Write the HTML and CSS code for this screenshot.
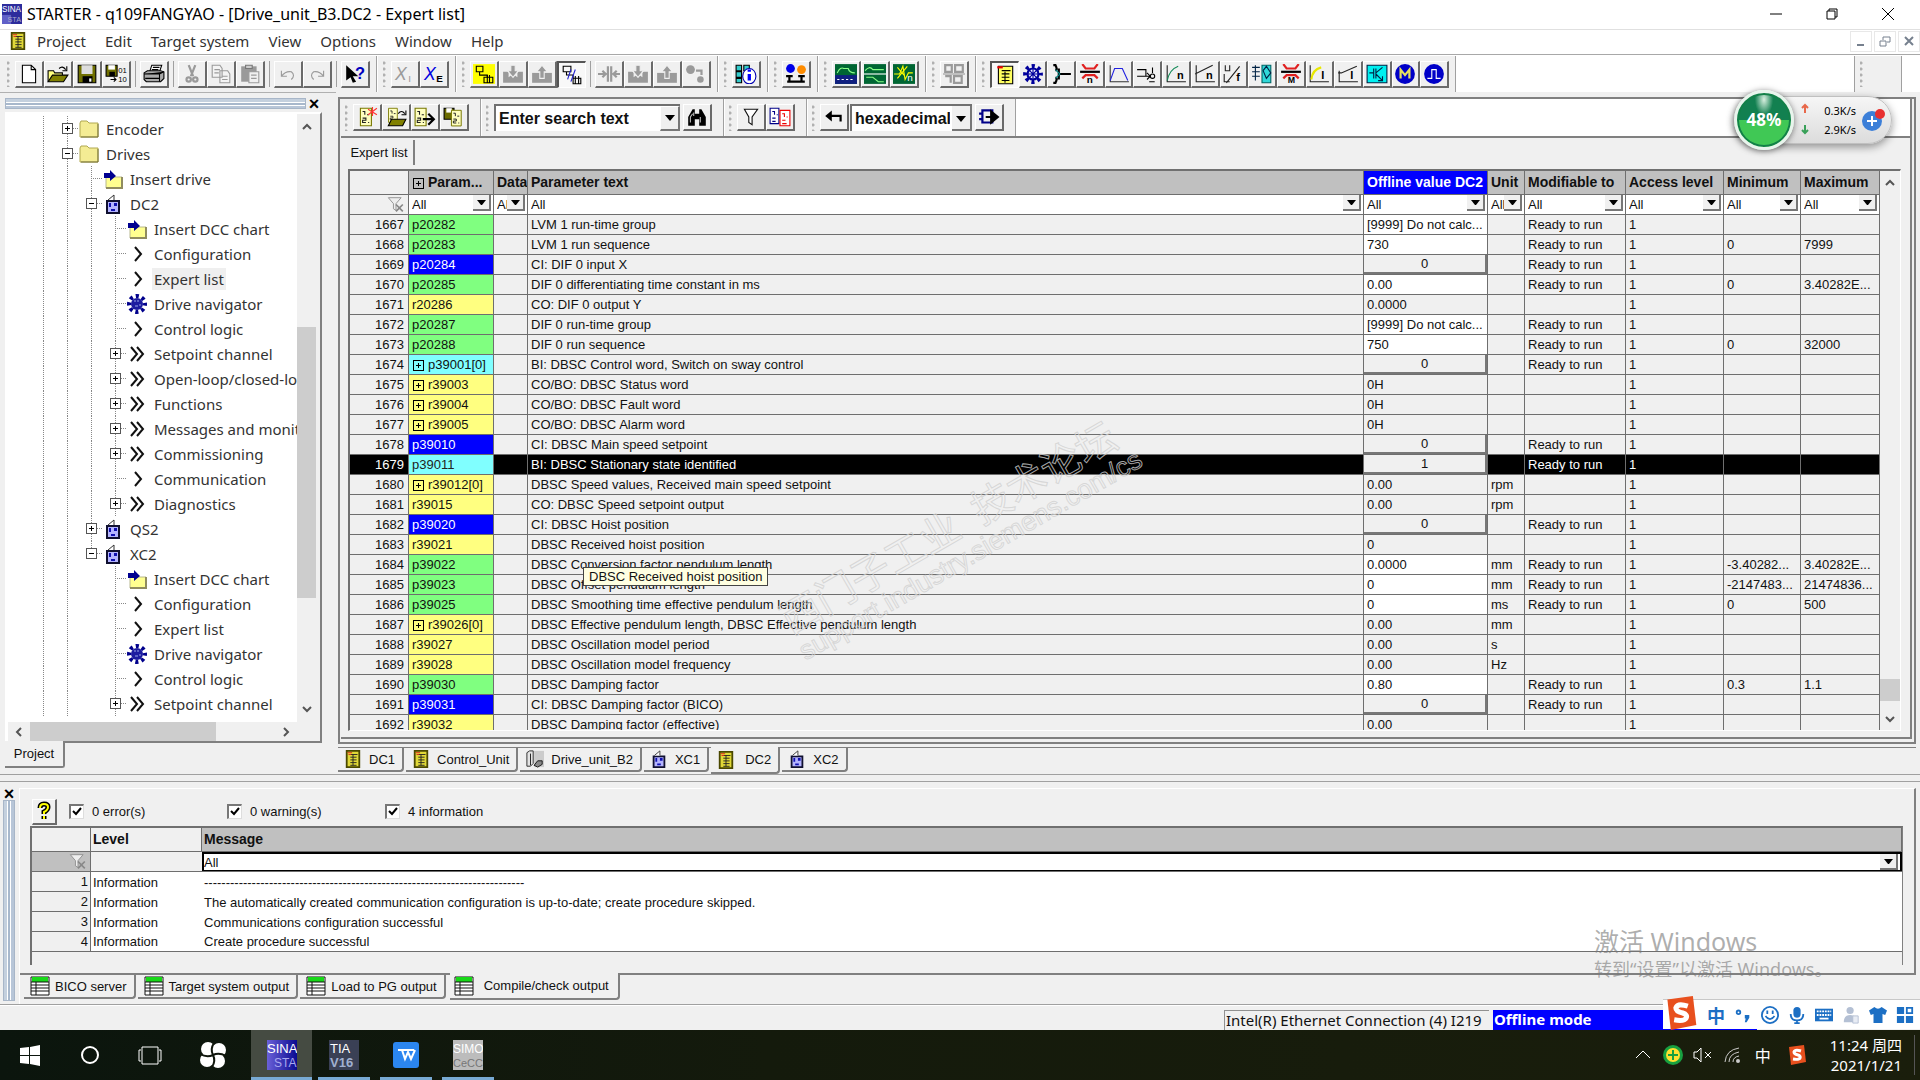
FILE: index.html
```html
<!DOCTYPE html>
<html lang="en">
<head>
    <meta charset="UTF-8">
    <meta name="viewport" content="width=device-width, initial-scale=1.0">
    <title>STARTER - q109FANGYAO</title>
    <link rel="stylesheet" href="styles.css">
</head>
<body>
    <svg class="sprite" aria-hidden="true">
        <symbol id="sheet" viewBox="0 0 20 20">
            <path d="M3 1h14v18H3z" fill="#e0d838" stroke="#4a4800" stroke-width="2"/>
            <path d="M7 5h8M7 8h7M7 11h7M7 14h7M7 17h7M10 5v12" stroke="#222" fill="none"/>
            <path d="M4 3h5M5 5h3" stroke="#e02020"/>
        </symbol>
        <symbol id="drive" viewBox="0 0 20 20">
            <path d="M4 7v12h12V7z" fill="#b4b4ff" stroke="#101030" stroke-width="2"/>
            <path d="M5 6l6-5v5" fill="#fff" stroke="#333"/>
            <path d="M6 9h2v4H6zM11 9h3v3h-3zM8 15h4v2H8z" fill="#1010b0"/>
        </symbol>
        <symbol id="folder" viewBox="0 0 20 20">
            <path d="M1 4l1-2h6l2 2h9v14H1z" fill="#f4ec94" stroke="#b0a850"/>
            <path d="M2 18h17V5" fill="none" stroke="#77733a"/>
        </symbol>
        <symbol id="insert" viewBox="0 0 20 20">
            <path d="M3 8h16v11H3z" fill="#ffff90" stroke="#b8b890"/>
            <path d="M3 19h16V8" fill="none" stroke="#908c60" stroke-width="2"/>
            <path d="M1 4h6V1l6 6-6 5V9H1z" fill="#000090"/>
        </symbol>
        <symbol id="chevron" viewBox="0 0 20 20"><path d="M8 3l6 7-6 7" fill="none" stroke="#111" stroke-width="2"/></symbol>
        <symbol id="chevrons" viewBox="0 0 20 20"><path d="M4 3l6 7-6 7M10 3l6 7-6 7" fill="none" stroke="#111" stroke-width="2"/></symbol>
        <symbol id="gear" viewBox="0 0 20 20">
            <circle cx="10" cy="10" r="6" fill="#1c1ca0"/>
            <circle cx="10" cy="10" r="8" fill="none" stroke="#00008c" stroke-width="4" stroke-dasharray="3.14 3.14" stroke-dashoffset="1.5"/>
            <path d="M7 7h2M11 6v2M8 12h3M12 11h2" stroke="#99a8e8"/>
        </symbol>
        <symbol id="funnel-x" viewBox="0 0 20 20">
            <path d="M1 2h15l-6 7v8l-3-2V9z" fill="#eee" stroke="#888"/>
            <path d="M10 10l8 8M18 10l-8 8" stroke="#888" stroke-width="2"/>
        </symbol>
        <symbol id="output" viewBox="0 0 20 20">
            <path d="M1 1h18v18H1z" fill="#fff" stroke="#111"/>
            <path d="M2 1h16v5H2z" fill="#18d818"/>
            <path d="M1 6h18M1 9h18M1 12h18M1 15h18M6 6v13" stroke="#111"/>
        </symbol>
        <symbol id="page12" viewBox="0 0 20 18">
            <path d="M4 1h10v16H4z" fill="#ffffc0" stroke="#777700"/>
            <path d="M6 4h2v3M10 7h2M6 10h3v2H6v2h3M11 14h1" stroke="#222" fill="none"/>
        </symbol>
        <symbol id="logo-s" viewBox="0 0 20 20">
            <path d="M2 2l15-2 2 17-15 3z" fill="#e8501e"/>
            <path d="M14 6q-6-2-7 1 0 2 4 3 3 1 2 3-1 2-7 1" fill="none" stroke="#fff" stroke-width="3"/>
        </symbol>
    </svg>

    <header class="titlebar">
        <svg class="app-icon" viewBox="0 0 22 22"><path d="M0 0h22v22H0z" fill="#2c2c9c"/><path d="M0 12h10v10H0z" fill="#6060c8"/><text x="0" y="9" font-size="9" fill="#fff">SINA</text><text x="6" y="20" font-size="8" fill="#aac">STA</text></svg>
        <h1 class="title">STARTER - q109FANGYAO - [Drive_unit_B3.DC2 - Expert list]</h1>
        <div class="window-buttons">
            <button aria-label="Minimize"><svg viewBox="0 0 12 12"><path d="M0 6h12"/></svg></button>
            <button aria-label="Restore"><svg viewBox="0 0 12 12"><path d="M1 3h8v8H1zM3 3V1h8v8H9"/></svg></button>
            <button aria-label="Close"><svg viewBox="0 0 12 12"><path d="M0 0l12 12M12 0L0 12"/></svg></button>
        </div>
    </header>

    <nav class="menubar">
        <svg class="menu-icon"><use href="#sheet"/></svg>
        <button>Project</button><button>Edit</button><button>Target system</button><button>View</button><button>Options</button><button>Window</button><button>Help</button>
        <div class="mdi-buttons">
            <button aria-label="Minimize document"><svg viewBox="0 0 12 12"><path d="M2 10h7"/></svg></button>
            <button aria-label="Restore document"><svg viewBox="0 0 12 12"><path d="M1 6h6v5H1zM4 5V2h7v5H8" stroke-width="1"/></svg></button>
            <button aria-label="Close document"><svg viewBox="0 0 12 12"><path d="M2 2l8 8M10 2l-8 8"/></svg></button>
        </div>
    </nav>

    <div class="toolbar main-toolbar" id="mainToolbar"></div>

    <main class="workspace">
        <aside class="dock">
            <div class="dock-head"><span class="gripper"></span><button class="dock-close" aria-label="Close project tree">×</button></div>
            <div class="tree-panel">
                <div class="tree-row">
                    <ul class="tree" id="tree"></ul>
                    <div class="vscroll">
                        <button aria-label="Scroll up"><svg viewBox="0 0 10 10"><path d="M1 7l4-4 4 4"/></svg></button>
                        <div class="track tree-track"><span class="thumb"></span></div>
                        <button aria-label="Scroll down"><svg viewBox="0 0 10 10"><path d="M1 3l4 4 4-4"/></svg></button>
                    </div>
                </div>
                <div class="hscroll">
                    <button aria-label="Scroll left"><svg viewBox="0 0 10 10"><path d="M7 1L3 5l4 4"/></svg></button>
                    <div class="track"><span class="thumb"></span></div>
                    <button aria-label="Scroll right"><svg viewBox="0 0 10 10"><path d="M3 1l4 4-4 4"/></svg></button>
                </div>
            </div>
            <div class="dock-tabs"><button class="dock-tab">Project</button></div>
        </aside>

        <section class="mdi">
            <div class="doc">
                <div class="sheet">
                    <div class="toolbar list-toolbar">
                        <div class="band">
                            <i class="grip"></i>
                            <button class="tool" aria-label="New list"><svg viewBox="0 0 20 18"><use href="#page12" width="20" height="18"/><path d="M15 0v8M11 2l8 5M19 1l-8 6" stroke="#f33"/></svg></button>
                            <button class="tool" aria-label="Open list"><svg viewBox="0 0 20 18"><use href="#page12" width="16" height="15"/><path d="M3 17l3-6h13l-3 6z" fill="#808000" stroke="#000"/><path d="M12 6q3-4 6 0M19 3v4h-4" fill="none" stroke="#000"/></svg></button>
                            <button class="tool" aria-label="Export list"><svg viewBox="0 0 20 18"><use href="#page12" x="-3" width="20" height="18"/><path d="M8 11h10M13 6l5 5-5 5" fill="none" stroke="#000" stroke-width="2"/></svg></button>
                            <button class="tool" aria-label="Save list"><svg viewBox="0 0 20 18"><path d="M1 1h9v10H1z" fill="#6b6b00" stroke="#000"/><path d="M3 1h5v4H3z" fill="#fff"/><use href="#page12" x="4" y="2" width="18" height="16"/></svg></button>
                        </div>
                        <div class="band search-band">
                            <i class="grip"></i>
                            <span class="combo"><input class="search" aria-label="Search text" value="Enter search text"><button class="drop" aria-label="Search history"></button></span>
                            <button class="tool" aria-label="Find"><svg viewBox="0 0 20 18"><path d="M2 17V9l4-7h2v4h4V2h2l4 7v8h-6v-6H8v6z" fill="#000"/><path d="M4 14V9l2-3M13 14V9M7 5v3" stroke="#bbb"/></svg></button>
                        </div>
                        <div class="band">
                            <i class="grip"></i>
                            <button class="tool" aria-label="Filter"><svg viewBox="0 0 20 18"><path d="M4 2h12l-5 7v7l-3-2V9z" fill="#fff" stroke="#111"/></svg></button>
                            <button class="tool" aria-label="Compare"><svg viewBox="0 0 20 18"><path d="M1 1h8v14H1z" fill="#fff" stroke="#008"/><path d="M10 3h9v14h-9z" fill="#fff" stroke="#e00"/><path d="M3 4h2v3M7 7h1M3 10h3M3 13h3" stroke="#008" fill="none"/><path d="M12 6h2v3M16 9h1M12 12h3M12 15h4" stroke="#e00" fill="none"/></svg></button>
                        </div>
                        <div class="band">
                            <i class="grip"></i>
                            <button class="tool" aria-label="Back"><svg viewBox="0 0 20 18"><path d="M7 8h9v5" fill="none" stroke="#000" stroke-width="2"/><path d="M8 3v10L2 8z" fill="#000"/></svg></button>
                            <select class="format" aria-label="Number format"><option>hexadecimal</option></select>
                            <button class="tool" aria-label="Apply"><svg viewBox="0 0 20 18"><path d="M4 3h9v11H4zM1 6h3M1 11h3" fill="none" stroke="#008" stroke-width="2"/><path d="M7 9h6M12 4l6 5-6 5z" fill="#000" stroke="#000" stroke-width="2"/></svg></button>
                        </div>
                    </div>
                    <div class="sheet-tabs"><button class="sheet-tab">Expert list</button></div>
                    <div class="grid-frame">
                        <div class="grid-scroll">
                            <table class="grid">
                                <colgroup><col class="c-num"><col class="c-param"><col class="c-data"><col><col class="c-value"><col class="c-unit"><col class="c-mod"><col class="c-access"><col class="c-min"><col class="c-max"></colgroup>
                                <thead>
                                    <tr><th class="blank"></th><th><span class="plus"></span>Param...</th><th>Data</th><th>Parameter text</th><th class="online">Offline value DC2</th><th>Unit</th><th>Modifiable to</th><th>Access level</th><th>Minimum</th><th>Maximum</th></tr>
                                    <tr class="filters" id="filters"></tr>
                                </thead>
                                <tbody id="params"></tbody>
                            </table>
                        </div>
                        <div class="vscroll">
                            <button aria-label="Scroll up"><svg viewBox="0 0 10 10"><path d="M1 7l4-4 4 4"/></svg></button>
                            <div class="track grid-track"><span class="thumb"></span></div>
                            <button aria-label="Scroll down"><svg viewBox="0 0 10 10"><path d="M1 3l4 4 4-4"/></svg></button>
                        </div>
                        <div class="tooltip" role="tooltip">DBSC Received hoist position</div>
                        <div class="stamp" aria-hidden="true"><span class="stamp-cn">西门子工业&ensp;技术论坛</span><span class="stamp-url">support.industry.siemens.com/cs</span></div>
                    </div>
                </div>
            </div>
            <div class="tabs doc-tabs">
                <button class="tab"><svg><use href="#sheet"/></svg>DC1</button>
                <button class="tab"><svg><use href="#sheet"/></svg>Control_Unit</button>
                <button class="tab"><svg viewBox="0 0 20 20"><path d="M9 1h11v18H9z" fill="#ccc"/><path d="M1 3l3-2h4v14l-3 3H1z" fill="#e4e4e4" stroke="#222"/><path d="M5 4v13M9 17l4-5h5v4l-5 3z" fill="#888" stroke="#111"/></svg>Drive_unit_B2</button>
                <button class="tab"><svg><use href="#drive"/></svg>XC1</button>
                <button class="tab active"><svg><use href="#sheet"/></svg>DC2</button>
                <button class="tab"><svg><use href="#drive"/></svg>XC2</button>
            </div>
        </section>
    </main>

    <section class="output">
        <div class="output-side"><button class="dock-close" aria-label="Close output">×</button><span class="gripper-v"></span></div>
        <div class="output-body">
            <div class="output-panel">
                <div class="checks">
                    <button class="tool help" aria-label="Help"><svg viewBox="0 0 18 20"><path d="M5 7q0-4 4-4t4 3q0 3-4 5v2M9 15v3" fill="none" stroke="#000" stroke-width="5"/><path d="M5 7q0-4 4-4t4 3q0 3-4 5v2M9 15v3" fill="none" stroke="#ff0" stroke-width="2"/></svg></button>
                    <label><input type="checkbox" checked>0 error(s)</label>
                    <label><input type="checkbox" checked>0 warning(s)</label>
                    <label><input type="checkbox" checked>4 information</label>
                </div>
                <div class="log-frame">
                    <table class="log">
                        <colgroup><col class="l-num"><col class="l-level"><col></colgroup>
                        <thead>
                            <tr><th></th><th>Level</th><th class="msg-head">Message</th></tr>
                            <tr class="log-filter"><td class="funnel"><svg><use href="#funnel-x"/></svg></td><td></td><td><select aria-label="Message filter"><option>All</option></select></td></tr>
                        </thead>
                        <tbody>
                            <tr><td>1</td><td>Information</td><td>--------------------------------------------------------------------------</td></tr>
                            <tr><td>2</td><td>Information</td><td>The automatically created communication configuration is up-to-date; create procedure skipped.</td></tr>
                            <tr><td>3</td><td>Information</td><td>Communications configuration successful</td></tr>
                            <tr><td>4</td><td>Information</td><td>Create procedure successful</td></tr>
                        </tbody>
                    </table>
                </div>
            </div>
            <div class="tabs output-tabs">
                <button class="tab"><svg><use href="#output"/></svg>BICO server</button>
                <button class="tab"><svg><use href="#output"/></svg>Target system output</button>
                <button class="tab"><svg><use href="#output"/></svg>Load to PG output</button>
                <button class="tab active"><svg><use href="#output"/></svg>Compile/check output</button>
            </div>
        </div>
    </section>

    <div class="statusbar">
        <span class="status-net">Intel(R) Ethernet Connection (4) I219</span>
        <span class="status-mode">Offline mode</span>
    </div>

    <footer class="taskbar">
        <button class="task" aria-label="Start"><svg viewBox="0 0 24 24"><path d="M2 5l9-1v8H2zM12 4l10-2v10H12zM2 13h9v8l-9-1zM12 13h10v10l-10-2z" fill="#fff"/></svg></button>
        <button class="task" aria-label="Cortana"><svg viewBox="0 0 24 24"><circle cx="12" cy="12" r="8" fill="none" stroke="#fff" stroke-width="2"/></svg></button>
        <button class="task" aria-label="Task view"><svg viewBox="0 0 24 24"><path d="M4 4h16v17H4zM3 7H1v11h2M21 7h2v11h-2" fill="none" stroke="#fff"/></svg></button>
        <button class="task fan" aria-label="Browser"><svg viewBox="0 0 28 28"><g fill="#fff"><circle cx="9" cy="8" r="7"/><circle cx="20" cy="9" r="7"/><circle cx="19" cy="20" r="7"/><circle cx="8" cy="19" r="7"/></g><path d="M14 14Q11 8 15 2M14 14q6-3 13 1M14 14q3 6-1 12M14 14q-6 3-13-1" fill="none" stroke="#10160c" stroke-width="2"/></svg></button>
        <button class="task app current" aria-label="STARTER"><svg viewBox="0 0 30 30"><defs><linearGradient id="sg"><stop offset="0" stop-color="#6a60d8"/><stop offset="1" stop-color="#0a0a90"/></linearGradient></defs><path d="M0 0h30v30H0z" fill="url(#sg)"/><text x="0" y="13" font-size="13" fill="#fff">SINA</text><text x="7" y="27" font-size="12" fill="#a8a8f0">STA</text></svg></button>
        <button class="task app" aria-label="TIA Portal V16"><svg viewBox="0 0 30 30"><path d="M0 0h30v30H0z" fill="#3a4055"/><text x="1" y="13" font-size="13" fill="#fff">TIA</text><text x="1" y="27" font-size="13" font-weight="bold" fill="#a0b0d0">V16</text></svg></button>
        <button class="task app" aria-label="WPS"><svg viewBox="0 0 30 30"><rect x="2" y="2" width="26" height="26" rx="3" fill="#2b86f0"/><path d="M7 10h4l3 9 3-7 3 7 4-9M11 10h12" fill="none" stroke="#fff" stroke-width="2"/></svg></button>
        <button class="task app" aria-label="SIMOCODE"><svg viewBox="0 0 30 30"><path d="M0 0h30v30H0z" fill="#bcbcbc"/><text x="0" y="13" font-size="12" fill="#fff">SIMO</text><text x="0" y="27" font-size="11" fill="#777">CeCC</text></svg></button>
        <div class="tray">
            <button aria-label="Hidden icons"><svg viewBox="0 0 20 20"><path d="M3 13l7-7 7 7" fill="none" stroke="#fff"/></svg></button>
            <button aria-label="Security"><svg viewBox="0 0 20 20"><circle cx="10" cy="10" r="10" fill="#18a040"/><circle cx="10" cy="10" r="7" fill="#ffe030"/><path d="M10 5v10M5 10h10" stroke="#18a040" stroke-width="2"/></svg></button>
            <button aria-label="Volume"><svg viewBox="0 0 20 20"><path d="M1 7h3l4-4v14l-4-4H1zM12 7l6 6M18 7l-6 6" fill="none" stroke="#fff"/></svg></button>
            <button aria-label="Network"><svg viewBox="0 0 20 20"><path d="M2 17Q3 5 16 3M6 17q0-8 10-10M10 17q0-5 6-6" fill="none" stroke="#ccc"/><circle cx="15" cy="16" r="2" fill="#ccc"/></svg></button>
            <button class="lang">中</button>
            <button aria-label="Sogou"><svg><use href="#logo-s"/></svg></button>
            <div class="clock"><span>11:24 周四</span><span>2021/1/21</span></div>
        </div>
    </footer>

    <div class="speed">
        <span class="ball">48%</span>
        <svg class="arrows" viewBox="0 0 8 34"><path d="M4 10V2M1 5l3-3 3 3" fill="none" stroke="#e8684a" stroke-width="2"/><path d="M4 22v8M1 27l3 3 3-3" fill="none" stroke="#38a058" stroke-width="2"/></svg>
        <span class="rates"><span>0.3K/s</span><span>2.9K/s</span></span>
        <svg class="boost" viewBox="0 0 24 24"><circle cx="11" cy="13" r="10" fill="#3c7fd8"/><path d="M11 8v10M6 13h10" stroke="#fff" stroke-width="2"/><circle cx="19" cy="6" r="5" fill="#e83030"/></svg>
    </div>

    <div class="activate"><span class="activate-title">激活 Windows</span><span>转到“设置”以激活 Windows。</span></div>

    <div class="ime">
        <svg class="ime-logo"><use href="#logo-s"/></svg>
        <button class="ime-lang">中</button>
        <button aria-label="Punctuation"><svg viewBox="0 0 20 20"><circle cx="5" cy="7" r="2" fill="none" stroke="#1c6fc4" stroke-width="2"/><path d="M12 10h5v3l-3 5h-2l1-4h-1z" fill="#1c6fc4"/></svg></button>
        <button aria-label="Emoji"><svg viewBox="0 0 20 20"><circle cx="10" cy="10" r="9" fill="none" stroke="#1c6fc4" stroke-width="2"/><path d="M7 5v4M13 5v4M5 11q5 7 10 0" fill="none" stroke="#1c6fc4" stroke-width="2"/></svg></button>
        <button aria-label="Voice"><svg viewBox="0 0 20 20"><rect x="6" y="1" width="8" height="12" rx="4" fill="#1c6fc4"/><path d="M3 9q0 7 7 7t7-7M10 16v4M7 19h6" fill="none" stroke="#1c6fc4" stroke-width="2"/></svg></button>
        <button aria-label="Keyboard"><svg viewBox="0 0 20 20"><path d="M0 3h20v14H0z" fill="#1c6fc4"/><path d="M2 6h16M2 10h16" stroke="#fff" stroke-width="2" stroke-dasharray="2 1"/><path d="M5 14h10" stroke="#fff" stroke-width="2"/></svg></button>
        <button aria-label="Account"><svg viewBox="0 0 20 20"><circle cx="9" cy="5" r="4" fill="#b4c0d4"/><path d="M2 18q0-8 7-8t7 8z" fill="#b4c0d4"/><path d="M12 11h6v8h-6z" fill="#e8ecf4" stroke="#b4c0d4"/></svg></button>
        <button aria-label="Skin"><svg viewBox="0 0 20 20"><path d="M0 5l6-4q4 4 8 0l6 4-2 5-3-1v10H5V9l-3 1z" fill="#1c6fc4"/></svg></button>
        <button aria-label="Toolbox"><svg viewBox="0 0 20 20"><path d="M1 1h8v8H1zM1 11h8v8H1zM11 11h8v8h-8z" fill="#1c6fc4"/><path d="M12 2h6v6h-6z" fill="none" stroke="#1c6fc4" stroke-width="2"/></svg></button>
    </div>

    <script src="app.js"></script>
</body>
</html>
```

FILE: styles.css
```css
* {
    box-sizing: border-box;
}

body {
    margin: 0;
    height: 100vh;
    display: flex;
    flex-direction: column;
    overflow: hidden;
    background: #f0f0f0;
    color: #111;
    font-family: "Liberation Sans", Arial, "Noto Sans CJK SC", sans-serif;
    font-size: 13px;
}

button {
    font: inherit;
    color: inherit;
    background: none;
    border: 0;
    padding: 0;
}

select,
input {
    font: inherit;
    color: inherit;
    margin: 0;
}

svg {
    display: block;
    flex: none;
}

.sprite {
    position: absolute;
    width: 0;
    height: 0;
}

/* Title and menu */
.titlebar {
    flex: none;
    height: 30px;
    display: flex;
    align-items: center;
    padding-bottom: 2px;
    padding-right: 4px;
    background: #fff;
    border-bottom: 1px solid #e0e0e0;
}

.app-icon {
    width: 20px;
    height: 20px;
    margin: 0 5px 0 2px;
}

.title {
    margin: 0;
    flex: 1;
    font: 400 16px/24px "Noto Sans", sans-serif;
    color: #000;
}

.window-buttons {
    display: flex;
}

.window-buttons button {
    width: 56px;
    display: flex;
    justify-content: center;
}

.window-buttons svg {
    width: 12px;
    height: 12px;
    fill: none;
    stroke: #000;
}

.menubar {
    flex: none;
    height: 25px;
    display: flex;
    align-items: center;
    gap: 19px;
    background: #fff;
    font: 15px/20px "Noto Sans", sans-serif;
    color: #333;
    border-bottom: 1px solid #a8a8a8;
    padding: 0 0 2px 9px;
}

.menu-icon {
    width: 18px;
    height: 20px;
    margin-right: -9px;
}

.mdi-buttons {
    margin-left: auto;
    display: flex;
    gap: 2px;
}

.mdi-buttons button {
    width: 22px;
    height: 21px;
    border: 1px solid #e8e8e8;
    display: flex;
    align-items: center;
    justify-content: center;
}

.mdi-buttons svg {
    width: 12px;
    height: 12px;
    fill: none;
    stroke: #76808e;
    stroke-width: 2;
}

/* Toolbars */
.toolbar {
    flex: none;
    display: flex;
    background: #fff;
}

.main-toolbar {
    height: 37px;
    padding-top: 1px;
}

.band {
    display: flex;
    align-items: center;
    padding: 0 6px 0 5px;
    background: #f0f0f0;
    border-right: 1px solid #a0a0a0;
    margin-right: 1px;
}

.grip {
    flex: none;
    width: 3px;
    height: 26px;
    margin-right: 5px;
    background: radial-gradient(circle at 1px 2px, #b0b0b0 1px, transparent 2px) 0 0 / 3px 6px;
}

.main-toolbar .band:first-child .grip {
    margin-left: 2px;
}

.tool {
    flex: 0 1 29px;
    width: 29px;
    height: 27px;
    display: flex;
    align-items: center;
    justify-content: center;
    background: #f0f0f0;
    border: 1px solid #fff;
    border-right: 2px solid #6a6a6a;
    border-bottom: 2px solid #6a6a6a;
}

.tool svg {
    width: 22px;
    height: 20px;
}

.tool.pressed {
    background: #f8f8f8;
    border: 1px solid #fff;
    border-top: 2px solid #555;
    border-left: 2px solid #555;
}

.split {
    width: 1px;
    height: 26px;
    background: #a0a0a0;
    margin: 0 4px;
}

.band.drive-tools {
    width: 479px;
}

.band.spare {
    margin-left: auto;
    margin-right: 18px;
    width: 48px;
    border-left: 1px solid #a0a0a0;
}

/* Project tree */
.workspace {
    flex: 1;
    min-height: 0;
    display: flex;
    border-bottom: 1px solid #a0a0a0;
}

.dock {
    flex: none;
    width: 336px;
    padding: 3px 14px 3px 5px;
    display: flex;
    flex-direction: column;
    border-top: 1px solid #b0b0b0;
}

.dock-head {
    display: flex;
    align-items: center;
    height: 15px;
}

.gripper {
    flex: 1;
    height: 11px;
    border: 1px solid #a8b6c8;
    background: linear-gradient(#c4d0de 0 3px, #fff 3px 4px, #a8b8cc 4px 6px, #fff 6px 7px, #b8c6d8 7px);
}

.dock-close {
    width: 16px;
    font-size: 18px;
    font-weight: bold;
    line-height: 14px;
    color: #000;
}

.tree-panel {
    flex: 1;
    min-height: 0;
    display: flex;
    flex-direction: column;
    border-right: 2px solid #808080;
    border-bottom: 2px solid #808080;
    border-left: 3px solid #fff;
    border-top: 2px solid #fff;
    margin-top: 1px;
    padding-right: 4px;
}

.tree-row {
    flex: 1;
    min-height: 0;
    display: flex;
}

.tree {
    flex: 1;
    min-width: 0;
    margin: 0;
    padding: 2px 0 0 23px;
    list-style: none;
    background: #fff;
    overflow: hidden;
    font: 15px "Noto Sans", sans-serif;
    color: #333;
}

.tree li {
    display: flex;
    align-items: center;
    height: 25px;
    white-space: nowrap;
}

.tree svg {
    width: 20px;
    height: 20px;
    margin-right: 5px;
}

.tree .label {
    padding: 0 2px;
    line-height: 22px;
}

.tree .label.selected {
    background: #efefef;
}

.guide {
    flex: none;
    width: 24px;
    height: 25px;
    display: flex;
    align-items: center;
    justify-content: center;
}

.guide.line,
.guide.join {
    background: repeating-linear-gradient(#888 0 1px, transparent 1px 2px) 12px 0 / 1px 100% no-repeat;
}

.guide.join {
    background: repeating-linear-gradient(#888 0 1px, transparent 1px 2px) 12px 0 / 1px 100% no-repeat,
        repeating-linear-gradient(90deg, #888 0 1px, transparent 1px 2px) 12px 12px / 12px 1px no-repeat;
}

.guide.end {
    background: repeating-linear-gradient(#888 0 1px, transparent 1px 2px) 12px 0 / 1px 50% no-repeat,
        repeating-linear-gradient(90deg, #888 0 1px, transparent 1px 2px) 12px 12px / 12px 1px no-repeat;
}

.toggle,
.plus {
    width: 11px;
    height: 11px;
    border: 1px solid #555;
    background: linear-gradient(#000, #000) 2px 4px / 5px 1px no-repeat #fff;
}

.toggle.closed,
.plus {
    background: linear-gradient(#000, #000) 2px 4px / 5px 1px no-repeat,
        linear-gradient(#000, #000) 4px 2px / 1px 5px no-repeat #fff;
}

.plus {
    display: inline-block;
    border-color: #000;
    background-color: transparent;
    margin: 0 4px 0 1px;
    vertical-align: -2px;
}

.vscroll {
    flex: none;
    width: 19px;
    display: flex;
    flex-direction: column;
    background: #f0f0f0;
}

.vscroll button,
.hscroll button {
    flex: none;
    height: 26px;
    display: flex;
    align-items: center;
    justify-content: center;
}

.vscroll svg,
.hscroll svg {
    width: 10px;
    height: 10px;
    fill: none;
    stroke: #555;
    stroke-width: 2;
}

.track {
    flex: 1;
    display: flex;
    flex-direction: column;
}

.thumb {
    background: #cdcdcd;
}

.tree-track {
    padding-top: 187px;
    padding-bottom: 98px;
}

.tree-track .thumb {
    flex: 1;
}

.hscroll {
    display: flex;
    height: 19px;
    background: #f0f0f0;
    padding-right: 19px;
}

.hscroll button {
    width: 22px;
    height: 19px;
}

.hscroll .thumb {
    flex: 1;
    width: 76%;
}

.dock-tabs {
    height: 28px;
}

.dock-tab {
    width: 60px;
    height: 27px;
    margin-top: -2px;
    background: #f0f0f0;
    border-right: 2px solid #808080;
    border-bottom: 2px solid #808080;
    border-bottom-right-radius: 3px;
}

/* Document area */
.mdi {
    flex: 1;
    min-width: 0;
    display: flex;
    flex-direction: column;
    padding: 5px 4px 0 2px;
}

.doc {
    flex: 1;
    min-height: 0;
    border: 2px solid #808080;
    padding: 0 2px 3px 1px;
    display: flex;
}

.sheet {
    flex: 1;
    min-width: 0;
    display: flex;
    flex-direction: column;
    border-right: 2px solid #808080;
    border-bottom: 2px solid #808080;
}

.list-toolbar {
    height: 39px;
    border-bottom: 2px solid #808080;
}

.list-toolbar .band {
    padding-left: 4px;
    padding-right: 11px;
}

.combo {
    display: flex;
    width: 186px;
    height: 27px;
    margin-right: 3px;
    border-top: 2px solid #707070;
    border-left: 2px solid #707070;
    background: #fff;
}

.search {
    flex: 1;
    min-width: 0;
    border: 0;
    padding: 0 3px;
    font-size: 16px;
    font-weight: bold;
    background: #fff;
}

.drop {
    flex: none;
    width: 20px;
    border: 1px solid #fff;
    border-right: 2px solid #777;
    border-bottom: 2px solid #777;
    background: url("data:image/svg+xml,%3Csvg xmlns='http://www.w3.org/2000/svg' width='10' height='6'%3E%3Cpath d='M0 0h10L5 6z'/%3E%3C/svg%3E") center no-repeat #f0f0f0;
}

.format {
    appearance: none;
    width: 122px;
    height: 27px;
    margin: 0 3px 0 1px;
    padding: 0 22px 0 3px;
    border: 0;
    border-top: 2px solid #707070;
    border-left: 2px solid #707070;
    border-radius: 0;
    font-size: 16px;
    font-weight: bold;
    text-overflow: clip;
    background: url("data:image/svg+xml,%3Csvg xmlns='http://www.w3.org/2000/svg' width='20' height='25'%3E%3Cpath d='M0 0h20v25H0z' fill='%23777'/%3E%3Cpath d='M0 0h18v23H0z' fill='%23f0f0f0'/%3E%3Cpath d='M4 10h10l-5 6z'/%3E%3C/svg%3E") right top no-repeat #fff;
}

.sheet-tabs {
    flex: none;
    height: 27px;
    padding-top: 2px;
}

.sheet-tab {
    width: 74px;
    height: 25px;
    padding-left: 4px;
    border-right: 2px solid #808080;
}

.grid-frame {
    position: relative;
    flex: 1;
    min-height: 0;
    display: flex;
    margin: 4px 9px 6px 7px;
    border-top: 2px solid #707070;
    border-left: 2px solid #707070;
    border-bottom: 1px solid #fff;
    border-right: 1px solid #fff;
}

.grid-scroll {
    flex: 1;
    min-width: 0;
    overflow: hidden;
}

.grid,
.log {
    width: 100%;
    table-layout: fixed;
    border-collapse: separate;
    border-spacing: 0;
}

.c-num { width: 59px; }
.c-param { width: 85px; }
.c-data { width: 34px; }
.c-value { width: 124px; }
.c-unit { width: 37px; }
.c-mod { width: 101px; }
.c-access { width: 98px; }
.c-min { width: 77px; }
.c-max { width: 79px; }

.grid th,
.grid td {
    height: 20px;
    padding: 0 0 0 3px;
    line-height: 19px;
    text-align: left;
    white-space: nowrap;
    overflow: hidden;
    background: #f0f0f0;
    border-right: 1px solid #6e6e6e;
    border-bottom: 1px solid #6e6e6e;
}

.grid th {
    height: 24px;
    line-height: 23px;
    font-size: 14px;
    background: #c0c0c0;
}

.grid th.blank {
    background: #f0f0f0;
}

.grid th.online {
    background: #0000ff;
    color: #fff;
}

.grid td:first-child {
    text-align: right;
    padding-right: 4px;
}

.grid .filters td {
    padding: 0;
    background: #fff;
}

.grid .filters td:first-child {
    background: #f0f0f0;
    padding-right: 3px;
}

.filters svg {
    width: 18px;
    height: 17px;
    margin-left: auto;
}

.filters select,
.log-filter select {
    display: block;
    appearance: none;
    width: 100%;
    height: 19px;
    padding: 0 20px 0 3px;
    border: 0;
    border-radius: 0;
    text-overflow: clip;
    background: url("data:image/svg+xml,%3Csvg xmlns='http://www.w3.org/2000/svg' width='20' height='17'%3E%3Cpath d='M0 0h18v16H0z' fill='%23777'/%3E%3Cpath d='M0 0h16v14H0z' fill='%23f0f0f0'/%3E%3Cpath d='M4 5h9l-4 5H8z'/%3E%3C/svg%3E") right top no-repeat #fff;
}

.grid td.green { background: #80ff80; }
.grid td.yellow { background: #ffff80; }
.grid td.cyan { background: #80ffff; }
.grid td.blue { background: #0000ff; color: #fff; }
.grid td.edit { background: #fff; }

.grid td.link {
    padding: 0;
}

.link button {
    display: block;
    width: 100%;
    height: 19px;
    background: #f0f0f0;
    border-right: 2px solid #777;
    border-bottom: 2px solid #777;
    line-height: 17px;
}

.grid .current td {
    background: #000;
    color: #fff;
}

.grid .current td.cyan {
    background: #80ffff;
    color: #222;
}

.grid .current td.link {
    color: #111;
}

.grid-frame .vscroll {
    width: 20px;
}

.grid-track .thumb {
    flex: none;
    height: 22px;
}

.grid-track {
    justify-content: flex-end;
    padding-bottom: 6px;
}

.grid-frame .vscroll button {
    height: 23px;
}

.tooltip {
    position: absolute;
    left: 233px;
    top: 396px;
    height: 19px;
    padding: 0 5px;
    line-height: 17px;
    white-space: nowrap;
    background: #ffffe1;
    border: 1px solid #444;
}

.stamp {
    position: absolute;
    left: 458px;
    top: 420px;
    display: flex;
    flex-direction: column;
    white-space: nowrap;
    color: transparent;
    -webkit-text-stroke: 1px rgba(208, 208, 208, 0.8);
    transform: rotate(-30deg);
    transform-origin: left bottom;
    pointer-events: none;
}

.stamp-cn {
    font: 40px/46px "Noto Sans CJK SC", sans-serif;
}

.stamp-url {
    font-size: 27px;
    line-height: 28px;
}

/* Bottom tabs */
.tabs {
    flex: none;
    display: flex;
    align-items: flex-start;
    gap: 2px;
    border-top: 1px solid #808080;
}

.tab {
    display: flex;
    align-items: center;
    gap: 7px;
    height: 24px;
    padding: 0 7px 0 6px;
    white-space: nowrap;
    background: #f0f0f0;
    border-right: 2px solid #808080;
    border-bottom: 2px solid #808080;
    border-bottom-right-radius: 4px;
}

.tab svg {
    width: 18px;
    height: 20px;
}

.tab.active {
    height: 27px;
    margin-top: -1px;
    gap: 10px;
}

.doc-tabs {
    height: 27px;
    margin-top: 3px;
}

/* Output window */
.output {
    flex: none;
    display: flex;
    margin-top: 6px;
    padding-top: 6px;
    border-top: 1px solid #a0a0a0;
    border-bottom: 1px solid #a0a0a0;
    height: 224px;
}

.output-side {
    flex: none;
    width: 20px;
    display: flex;
    flex-direction: column;
    padding-left: 3px;
    border-right: 1px solid #fff;
}

.output-side .dock-close {
    width: 12px;
    height: 12px;
    line-height: 10px;
}

.gripper-v {
    flex: 1;
    width: 12px;
    margin-bottom: 3px;
    border: 1px solid #a8b6c8;
    background: linear-gradient(90deg, #c4d0de 0 3px, #fff 3px 4px, #a8b8cc 4px 6px, #fff 6px 7px, #b8c6d8 7px);
}

.output-body {
    flex: 1;
    min-width: 0;
    display: flex;
    flex-direction: column;
}

.output-panel {
    flex: 1;
    min-height: 0;
    display: flex;
    flex-direction: column;
    padding: 8px 11px 8px 10px;
    margin-right: 4px;
    border-right: 2px solid #808080;
    border-top: 1px solid #fff;
}

.checks {
    flex: none;
    display: flex;
    align-items: center;
    height: 29px;
    padding-left: 2px;
}

.checks .help {
    flex: none;
    width: 25px;
    height: 26px;
    margin-right: 12px;
}

.help svg {
    width: 18px;
    height: 20px;
}

.checks label {
    display: flex;
    align-items: center;
    gap: 8px;
    width: 158px;
}

.checks input {
    appearance: none;
    width: 15px;
    height: 15px;
    border: 1px solid #ddd;
    border-top: 2px solid #777;
    border-left: 2px solid #777;
    background: url("data:image/svg+xml,%3Csvg xmlns='http://www.w3.org/2000/svg' width='10' height='10'%3E%3Cpath d='M1 4l3 3 5-6' fill='none' stroke='%23000' stroke-width='2'/%3E%3C/svg%3E") center no-repeat #fff;
}

.log-frame {
    flex: 1;
    min-height: 0;
    border-top: 2px solid #707070;
    border-left: 2px solid #707070;
    border-right: 1px solid #808080;
}

.l-num { width: 59px; }
.l-level { width: 111px; }

.log th,
.log td {
    height: 20px;
    padding: 0 2px;
    line-height: 19px;
    text-align: left;
    white-space: nowrap;
    background: #fff;
}

.log th {
    height: 24px;
    font-size: 14px;
    background: #f0f0f0;
    border-right: 1px solid #6e6e6e;
    border-bottom: 1px solid #6e6e6e;
}

.log .msg-head {
    background: #c0c0c0;
}

.log td:first-child {
    text-align: right;
    background: #f0f0f0;
    border-right: 1px solid #6e6e6e;
    border-bottom: 1px solid #6e6e6e;
}

.log tbody tr:last-child td {
    border-bottom: 1px solid #6e6e6e;
}

.log .log-filter td {
    padding: 0;
    background: #f0f0f0;
    border-bottom: 1px solid #6e6e6e;
}

.log .log-filter td.funnel {
    background: #c0c0c0;
    padding-right: 3px;
}

.funnel svg {
    width: 18px;
    height: 17px;
    margin-left: auto;
}

.log-filter select {
    border: 2px solid #000;
    border-bottom-width: 1px;
    padding-left: 0;
    line-height: 15px;
}

.output-tabs {
    height: 31px;
    padding-left: 4px;
    margin-right: 4px;
    border-top: 2px solid #808080;
}

.output-tabs .tab {
    gap: 5px;
}

.output-tabs .tab svg {
    width: 20px;
}

.output-tabs .tab.active {
    gap: 10px;
    padding-left: 4px;
    padding-right: 9px;
    margin-left: 2px;
    margin-top: -2px;
}

/* Status bar */
.statusbar {
    flex: none;
    height: 25px;
    padding-top: 4px;
    display: flex;
    justify-content: flex-end;
    gap: 4px;
    border-top: 1px solid #fff;
    font: 15px/19px "Noto Sans", sans-serif;
}

.status-net {
    width: 265px;
    padding-left: 1px;
    border-top: 1px solid #909090;
    border-left: 1px solid #909090;
    white-space: nowrap;
    overflow: hidden;
}

.status-mode {
    width: 427px;
    padding-left: 1px;
    background: linear-gradient(90deg, #0000ff 264px, #f0f0f0 264px);
    color: #fff;
    font-weight: bold;
}

/* Taskbar */
.taskbar {
    flex: none;
    height: 50px;
    display: flex;
    background: linear-gradient(90deg, #0b150d, #141a0c 40%, #1a1e0c);
    color: #fff;
}

.task {
    width: 60px;
    display: flex;
    align-items: center;
    justify-content: center;
}

.task svg {
    width: 24px;
    height: 24px;
}

.task.fan {
    width: 66px;
}

.task.fan svg {
    width: 28px;
    height: 28px;
}

.task.app {
    width: 52px;
    margin-left: 6px;
    margin-right: 4px;
    border-bottom: 3px solid #78aad4;
    padding-top: 3px;
}

.task.app svg {
    width: 30px;
    height: 30px;
}

.task.current {
    width: 61px;
    margin-left: 5px;
    margin-right: 0;
    background: #454b42;
}

.tray {
    margin-left: auto;
    display: flex;
    align-items: center;
    gap: 10px;
    padding-right: 5px;
}

.tray svg {
    width: 20px;
    height: 20px;
}

.tray button {
    width: 20px;
}

.tray .lang {
    margin-right: 4px;
    font: 16px "Noto Sans CJK SC", sans-serif;
}

.clock {
    display: flex;
    flex-direction: column;
    align-items: flex-end;
    padding: 0 12px 0 13px;
    border-right: 1px solid #555;
    font: 15px/20px "Noto Sans", "Noto Sans CJK SC", sans-serif;
}

/* Network speed widget */
.speed {
    position: absolute;
    top: 96px;
    right: 28px;
    height: 48px;
    width: 158px;
    display: flex;
    align-items: center;
    border-radius: 24px;
    background: linear-gradient(#f6f6f6, #dcdcdc);
    border: 1px solid #c0c0c0;
    box-shadow: 0 3px 8px rgba(0, 0, 0, 0.4);
}

.ball {
    flex: none;
    width: 60px;
    height: 60px;
    margin-left: -1px;
    border-radius: 50%;
    border: 3px solid #e8f4ec;
    background: radial-gradient(ellipse at 50% 12%, #d8f0e0 0, transparent 24%), linear-gradient(#128050 50%, #40c855 50%);
    box-shadow: inset 0 0 0 2px #128048, 0 1px 6px rgba(0, 0, 0, 0.5);
    color: #fff;
    font: bold 17px/54px "Noto Sans", sans-serif;
    text-align: center;
}

.arrows {
    width: 8px;
    height: 34px;
    margin-left: 7px;
}

.rates {
    display: flex;
    flex-direction: column;
    margin-left: auto;
    font: 11px/19px "Noto Sans", sans-serif;
    color: #000;
}

.boost {
    width: 24px;
    height: 24px;
    margin: 0 6px 0 5px;
}

.activate {
    position: absolute;
    right: 93px;
    bottom: 97px;
    width: 233px;
    display: flex;
    flex-direction: column;
    font: 18px/28px "Noto Sans", "Noto Sans CJK SC", sans-serif;
    white-space: nowrap;
    color: rgba(120, 120, 120, 0.6);
}

.activate-title {
    font-size: 25px;
}

/* Input method bar */
.ime {
    position: absolute;
    right: 0;
    bottom: 51px;
    height: 30px;
    display: flex;
    align-items: center;
    gap: 7px;
    padding-right: 5px;
    background: #fff;
    border-top: 1px solid #c8c8c8;
}

.ime button {
    width: 20px;
}

.ime svg {
    width: 20px;
    height: 18px;
}

.ime .ime-logo {
    width: 36px;
    height: 34px;
    margin-bottom: 4px;
}

.ime .ime-lang {
    color: #1c6fc4;
    font: bold 18px "Noto Sans CJK SC", sans-serif;
}
```

FILE: app.js
```js
const G = '#9a9a9a';

// Toolbar glyphs, drawn on a 20x18 box
const icons = {
    new: '<path d="M4 1h8l4 4v12H4zM12 1v4h4" fill="#fff" stroke="#000"/>',
    open: '<path d="M1 16V6h5l1 2h7v3" fill="#ffff80" stroke="#000"/><path d="M1 16l4-6h14l-4 6z" fill="#808000" stroke="#000"/><path d="M11 4q3-3 6 1M18 2v4h-4" fill="none" stroke="#000"/>',
    save: '<path d="M2 1h16v16H2z" fill="#707000" stroke="#000"/><path d="M5 1h10v8H5z" fill="#ddd"/><path d="M6 11h9v6H6z" fill="#000"/><path d="M12 13h2v3h-2z" fill="#fff"/>',
    saveCompile: '<path d="M1 1h10v10H1z" fill="#707000" stroke="#000"/><path d="M3 1h6v4H3z" fill="#fff"/><path d="M4 7h5v4H4z" fill="#000"/><text x="12" y="8" font-size="7">01</text><text x="12" y="16" font-size="7">10</text><path d="M5 14h5M8 12l2 2-2 2" fill="none" stroke="#000"/>',
    print: '<path d="M6 7l2-6h9l-2 6" fill="#fff" stroke="#000"/><path d="M1 8l3-2h12l3 1v6l-3 3H3l-2-2z" fill="#aaa" stroke="#000"/><path d="M1 9h14l4-2M2 13h13M9 3h6M8 5h6M15 9v7" stroke="#000"/>',
    cut: `<path d="M7 1l4 10M13 1L9 11" stroke="${G}" stroke-width="2"/><circle cx="7" cy="14" r="2" fill="none" stroke="${G}" stroke-width="2"/><circle cx="13" cy="14" r="2" fill="none" stroke="${G}" stroke-width="2"/>`,
    copy: `<path d="M2 1h7l2 3v8H2zM9 6h7l2 3v8H9z" fill="#f4f4f4" stroke="${G}"/><path d="M4 5h5M4 8h4M11 11h5M11 14h5" stroke="${G}"/>`,
    paste: `<path d="M2 2h14v14H2z" fill="${G}"/><path d="M6 1h6v3H6z" fill="#ccc" stroke="#777"/><path d="M9 7h9v10H9z" fill="#f0f0f0" stroke="${G}"/><path d="M11 10h5M11 13h5" stroke="${G}"/>`,
    undo: `<path d="M4 6v5h5M4 11q4-5 9-4 4 3 0 7" fill="none" stroke="${G}"/>`,
    redo: `<path d="M16 6v5h-5M16 11q-4-5-9-4-4 3 0 7" fill="none" stroke="${G}"/>`,
    whats: '<path d="M2 1v14l4-3 2 5 3-1-3-5h5z" fill="#000"/><text x="10" y="14" font-size="15" font-weight="bold" fill="#0000c0">?</text>',
    xi: `<text x="1" y="14" font-size="16" font-style="italic" fill="${G}">X</text><text x="13" y="16" font-size="9" fill="${G}">I</text>`,
    xe: '<text x="1" y="14" font-size="16" font-style="italic" fill="#0000e0">X</text><text x="12" y="16" font-size="9" font-weight="bold">E</text>',
    connect: '<path d="M0 0h20v18H0z" fill="#ffff00"/><path d="M3 2h6v5H3zM6 7v3h7v2" fill="none" stroke="#000"/><path d="M10 12h8v5h-8zM13 10v7M15 10v7" fill="none" stroke="#000"/>',
    down: `<path d="M1 7h5v5l4-3 4 3V7h5v10H1z" fill="${G}"/><path d="M8 1h4v5h3l-5 6-5-6h3z" fill="${G}" stroke="#f0f0f0"/>`,
    up: `<path d="M1 8h18v9H1z" fill="${G}"/><path d="M8 13V7H5l5-6 5 6h-3v6z" fill="${G}" stroke="#f0f0f0"/>`,
    disconnect: '<path d="M2 1h7v5H2zM5 6v3h6v3" fill="none" stroke="#000"/><path d="M11 12h7v5h-7zM13 10v7M16 10v7" fill="none" stroke="#000"/><path d="M9 4l-3 9M13 4l-4 11" stroke="#2020d0"/>',
    join: `<path d="M9 2v14M12 2v14M0 9h7M20 9h-6M4 6l3 3-3 3M17 6l-3 3 3 3" fill="none" stroke="${G}" stroke-width="2"/>`,
    nodes: `<circle cx="5" cy="5" r="4" fill="${G}"/><circle cx="14" cy="14" r="3" fill="${G}"/><path d="M10 6h5v4" fill="none" stroke="${G}" stroke-width="2"/>`,
    info: '<path d="M1 1h5v5H1zM8 1h5v5H8zM1 7h5v5H1zM1 13h5v4H1z" fill="#3cc" stroke="#000"/><ellipse cx="13" cy="11" rx="6" ry="7" fill="#fff" stroke="#0000b0"/><path d="M13 9v6M13 5v2" stroke="#00f" stroke-width="3"/>',
    axes: '<circle cx="5" cy="4" r="4" fill="#0000e8"/><circle cx="15" cy="5" r="4" fill="#ff8c00"/><path d="M1 11h6M12 11h6M4 11v5h11v-5M2 16h16" fill="none" stroke="#000" stroke-width="2"/>',
    trace: '<path d="M0 0h20v18H0z" fill="#063"/><path d="M0 10h20v8H0z" fill="#102080"/><path d="M2 8q3-6 6-4h4q1 4 6 4" fill="none" stroke="#8f8"/><path d="M2 14h16" stroke="#fff" stroke-dasharray="2 2"/>',
    trace2: '<path d="M0 0h20v18H0z" fill="#063"/><path d="M0 9h20" stroke="#fff"/><path d="M1 6q4-5 7-1h10M2 12h6l5 4h5" fill="none" stroke="#8f8"/>',
    trace3: '<path d="M0 0h20v18H0z" fill="#063"/><path d="M1 9h5l3-7 2 12 3-6h4M4 3l6 7M13 2L4 13" fill="none" stroke="#ff0"/><text x="13" y="15" font-size="9" fill="#fff">n</text>',
    grid: `<path d="M2 1h6v6H2zM11 1h7v6h-7zM2 11h5v6M10 11h7v6h-7z" fill="none" stroke="${G}" stroke-width="2"/><path d="M0 9h20" stroke="${G}"/>`,
    list: '<path d="M4 1h13v16H4z" fill="#ffff60" stroke="#000"/><path d="M7 5h8M7 8h7M7 11h7M7 14h7M10 6v10" stroke="#000"/><path d="M3 2h5" stroke="#e00" stroke-width="2"/>',
    gear: '<circle cx="10" cy="9" r="5" fill="#eef" stroke="#00009c" stroke-width="2"/><circle cx="10" cy="9" r="7" fill="none" stroke="#00009c" stroke-width="4" stroke-dasharray="2.75 2.75" stroke-dashoffset="1.4"/><path d="M10 4v10M5 9h10M6 5l8 8M14 5l-8 8" stroke="#00009c"/>',
    mech: '<path d="M3 1h2q2 4 0 5M3 17h2q2-4 0-5M8 4v10M8 9h11" fill="none" stroke="#000" stroke-width="2"/><path d="M5 5l4 4-4 4" fill="none" stroke="#088"/>',
    limN: '<path d="M3 0l3 4h8l3-4M3 13l3-3h8l3 3" fill="none" stroke="#e02020" stroke-width="2"/><path d="M1 7h18" stroke="#000" stroke-width="2"/><text x="7" y="17" font-size="9" font-weight="bold">n</text>',
    ramp: '<path d="M2 1v15h17" fill="none" stroke="#333"/><path d="M2 15L6 4h7l5 11" fill="none" stroke="#2020e0"/>',
    sum: '<path d="M1 5h8v6h4M1 11h8M10 8l3 3-3 3" fill="none" stroke="#000"/><circle cx="15" cy="11" r="2" fill="none" stroke="#000"/><path d="M15 3v5M12 16h5" stroke="#000"/>',
    curveN: '<path d="M2 1v15h17" fill="none" stroke="#222"/><path d="M2 15Q4 5 12 2" fill="none" stroke="#185"/><text x="11" y="14" font-size="10" font-weight="bold">n</text>',
    lineN: '<path d="M2 1v15h17M1 9L17 1" fill="none" stroke="#222"/><text x="11" y="14" font-size="10" font-weight="bold">n</text>',
    uf: '<path d="M3 1v5h4V1M4 17L16 2M2 9v7h5" fill="none" stroke="#222"/><text x="13" y="15" font-size="10" font-weight="bold">f</text>',
    motor: '<path d="M10 1h8v16h-8z" fill="#30d8d8" stroke="#066"/><path d="M1 3h7M1 7h7M1 11h7M4 1v14M11 6l3-4 4 6-4 5z" fill="none" stroke="#024"/>',
    limM: '<path d="M3 0l3 4h8l3-4M3 13l3-3h8l3 3" fill="none" stroke="#e02020" stroke-width="2"/><path d="M1 7h18" stroke="#000" stroke-width="2"/><text x="7" y="17" font-size="8" font-weight="bold">M</text>',
    curveI: '<path d="M2 1v15h17" fill="none" stroke="#222"/><path d="M3 14Q4 5 12 3" fill="none" stroke="#e8e800" stroke-width="2"/><text x="12" y="14" font-size="10" font-weight="bold">I</text>',
    lineI: '<path d="M2 6v10h17M1 8h3l14-6" fill="none" stroke="#222"/><text x="12" y="14" font-size="10" font-weight="bold">I</text>',
    igbt: '<path d="M1 1h18v16H1z" fill="#00f0f0" stroke="#024"/><path d="M3 8h4M7 4v9M9 4v9M9 8l6-5M9 9l6 6M15 11v4h-4" fill="none" stroke="#024"/>',
    motorM: '<circle cx="10" cy="9" r="9" fill="#0000c8"/><path d="M6 13V5l4 5 4-5v8" fill="none" stroke="#e8e060" stroke-width="2"/>',
    pulse: '<circle cx="10" cy="9" r="9" fill="#0000c8"/><path d="M4 13h4V5h4v8h4" fill="none" stroke="#fff"/>'
};

// '|' is a separator, a leading '!' marks a pressed button
const bands = [
    'new open save saveCompile | print | cut copy paste | undo redo | whats',
    'xi xe',
    'connect down up !disconnect | join down up nodes',
    'info',
    'axes',
    'trace trace2 trace3',
    'grid',
    '!list gear mech limN ramp sum curveN lineN uf motor limM curveI lineI igbt motorM pulse'
];

function toolButton(name) {
    if (name === '|') return '<i class="split"></i>';
    const id = name.replace('!', '');
    const cls = name === id ? 'tool' : 'tool pressed';
    return `<button class="${cls}" aria-label="${id}"><svg viewBox="0 0 20 18">${icons[id]}</svg></button>`;
}

document.getElementById('mainToolbar').innerHTML = bands
    .map(b => `<div class="band${b.includes('gear') ? ' drive-tools' : ''}"><i class="grip"></i>${b.split(' ').map(toolButton).join('')}</div>`)
    .join('') + '<div class="band spare"><i class="grip"></i></div>';

// guides: | line, t join, + closed, - open, e open (last), _ empty
const nodes = [
    ['|+', 'folder', 'Encoder'],
    ['|-', 'folder', 'Drives'],
    ['||t', 'insert', 'Insert drive'],
    ['||-', 'drive', 'DC2'],
    ['|||t', 'insert', 'Insert DCC chart'],
    ['|||t', 'chevron', 'Configuration'],
    ['|||t', 'chevron', 'Expert list', true],
    ['|||t', 'gear', 'Drive navigator'],
    ['|||t', 'chevron', 'Control logic'],
    ['|||+', 'chevrons', 'Setpoint channel'],
    ['|||+', 'chevrons', 'Open-loop/closed-loop control'],
    ['|||+', 'chevrons', 'Functions'],
    ['|||+', 'chevrons', 'Messages and monitoring'],
    ['|||+', 'chevrons', 'Commissioning'],
    ['|||t', 'chevron', 'Communication'],
    ['|||+', 'chevrons', 'Diagnostics'],
    ['||+', 'drive', 'QS2'],
    ['||e', 'drive', 'XC2'],
    ['||_t', 'insert', 'Insert DCC chart'],
    ['||_t', 'chevron', 'Configuration'],
    ['||_t', 'chevron', 'Expert list'],
    ['||_t', 'gear', 'Drive navigator'],
    ['||_t', 'chevron', 'Control logic'],
    ['||_+', 'chevrons', 'Setpoint channel']
];

const guides = {
    '|': '<span class="guide line"></span>',
    't': '<span class="guide join"></span>',
    '_': '<span class="guide"></span>',
    '+': '<span class="guide join"><button class="toggle closed" aria-label="Expand"></button></span>',
    '-': '<span class="guide join"><button class="toggle" aria-label="Collapse"></button></span>',
    'e': '<span class="guide end"><button class="toggle" aria-label="Collapse"></button></span>'
};

document.getElementById('tree').innerHTML = nodes.map(([g, icon, label, sel]) =>
    `<li>${[...g].map(c => guides[c]).join('')}<svg><use href="#${icon}"/></svg><span class="label${sel ? ' selected' : ''}">${label}</span></li>`
).join('');

document.getElementById('filters').innerHTML =
    '<td><svg><use href="#funnel-x"/></svg></td>' +
    ['Parameter', 'Data', 'Text', 'Value', 'Unit', 'Modifiable', 'Access', 'Minimum', 'Maximum']
        .map(n => `<td><select aria-label="${n} filter"><option>All</option></select></td>`).join('');

// colour, parameter, text, value, unit, modifiable, min, max
// value prefix: '=' editable, '@' interconnection button
const R = 'Ready to run';
const params = [
    ['green', 'p20282', 'LVM 1 run-time group', '=[9999] Do not calc...', '', R],
    ['green', 'p20283', 'LVM 1 run sequence', '=730', '', R, '0', '7999'],
    ['blue', 'p20284', 'CI: DIF 0 input X', '@0', '', R],
    ['green', 'p20285', 'DIF 0 differentiating time constant in ms', '=0.00', '', R, '0', '3.40282E...'],
    ['yellow', 'r20286', 'CO: DIF 0 output Y', '0.0000'],
    ['green', 'p20287', 'DIF 0 run-time group', '=[9999] Do not calc...', '', R],
    ['green', 'p20288', 'DIF 0 run sequence', '=750', '', R, '0', '32000'],
    ['cyan', '+p39001[0]', 'BI: DBSC Control word, Switch on sway control', '@0', '', R],
    ['yellow', '+r39003', 'CO/BO: DBSC Status word', '0H'],
    ['yellow', '+r39004', 'CO/BO: DBSC Fault word', '0H'],
    ['yellow', '+r39005', 'CO/BO: DBSC Alarm word', '0H'],
    ['blue', 'p39010', 'CI: DBSC Main speed setpoint', '@0', '', R],
    ['cyan', 'p39011', 'BI: DBSC Stationary state identified', '@1', '', R],
    ['yellow', '+r39012[0]', 'DBSC Speed values, Received main speed setpoint', '0.00', 'rpm'],
    ['yellow', 'r39015', 'CO: DBSC Speed setpoint output', '0.00', 'rpm'],
    ['blue', 'p39020', 'CI: DBSC Hoist position', '@0', '', R],
    ['yellow', 'r39021', 'DBSC Received hoist position', '0'],
    ['green', 'p39022', 'DBSC Conversion factor pendulum length', '=0.0000', 'mm', R, '-3.40282...', '3.40282E...'],
    ['green', 'p39023', 'DBSC Offset pendulum length', '=0', 'mm', R, '-2147483...', '21474836...'],
    ['green', 'p39025', 'DBSC Smoothing time effective pendulum length', '=0', 'ms', R, '0', '500'],
    ['yellow', '+r39026[0]', 'DBSC Effective pendulum length, DBSC Effective pendulum length', '0.00', 'mm'],
    ['yellow', 'r39027', 'DBSC Oscillation model period', '0.00', 's'],
    ['yellow', 'r39028', 'DBSC Oscillation model frequency', '0.00', 'Hz'],
    ['green', 'p39030', 'DBSC Damping factor', '=0.80', '', R, '0.3', '1.1'],
    ['blue', 'p39031', 'CI: DBSC Damping factor (BICO)', '@0', '', R],
    ['yellow', 'r39032', 'DBSC Damping factor (effective)', '0.00']
];

function valueCell(v) {
    if (v[0] === '@') return `<td class="link"><button>${v.slice(1)}</button></td>`;
    if (v[0] === '=') return `<td class="edit">${v.slice(1)}</td>`;
    return `<td>${v}</td>`;
}

document.getElementById('params').innerHTML = params.map(
    ([colour, id, text, value, unit = '', mod = '', min = '', max = ''], i) => `
    <tr${id === 'p39011' ? ' class="current"' : ''}>
        <td>${1667 + i}</td>
        <td class="${colour}">${id.replace('+', '<span class="plus"></span>')}</td>
        <td></td><td>${text}</td>${valueCell(value)}
        <td>${unit}</td><td>${mod}</td><td>1</td><td>${min}</td><td>${max}</td>
    </tr>`
).join('');
```
